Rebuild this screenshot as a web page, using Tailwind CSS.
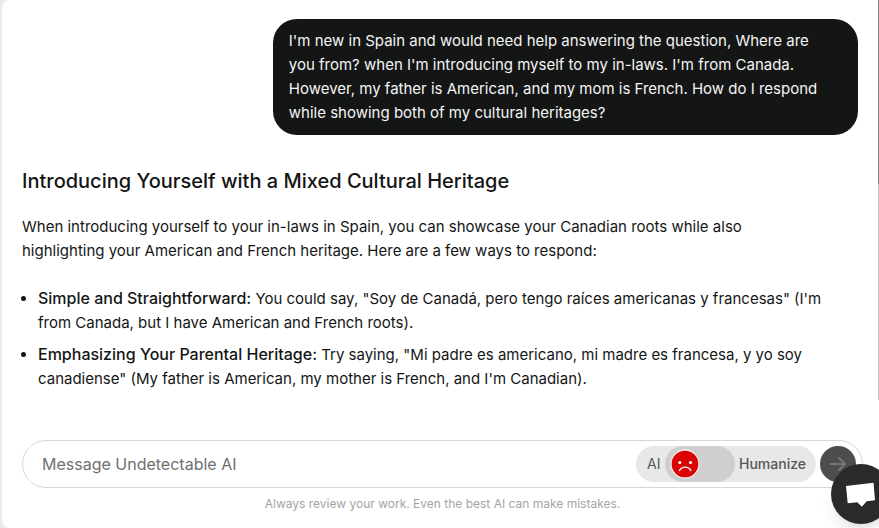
<!DOCTYPE html>
<html lang="en">
<head>
    <meta charset="UTF-8">
    <meta name="viewport" content="width=device-width, initial-scale=1.0">
    <title>Undetectable AI Chat</title>
    <script src="https://cdn.jsdelivr.net/npm/@tailwindcss/browser@4"></script>
</head>
<body class="bg-[#e9ebec] font-['Inter','Liberation_Sans',sans-serif] text-[15px] leading-6 text-[#141615]">
    <div class="ml-0.5 flex h-screen flex-col overflow-hidden rounded-l-lg bg-white">
        <div class="flex min-h-0 flex-1">
            <main class="min-w-0 flex-1 overflow-hidden px-5 pt-[19px]">
                <div class="ml-auto w-[70%] rounded-3xl bg-[#141615] py-[10px] pr-6 pl-4 text-[#f4f4f4]">
                    I'm new in Spain and would need help answering the question, Where are you from? when I'm introducing myself to my in-laws. I'm from Canada. However, my father is American, and my mom is French. How do I respond while showing both of my cultural heritages?
                </div>

                <article class="mt-8">
                    <h2 class="text-xl font-medium leading-7">Introducing Yourself with a Mixed Cultural Heritage</h2>
                    <p class="mt-5 pr-12">When introducing yourself to your in-laws in Spain, you can showcase your Canadian roots while also highlighting your American and French heritage. Here are a few ways to respond:</p>
                    <ul class="mt-6 list-disc space-y-2 pr-4 pl-4">
                        <li><strong class="text-base leading-none font-medium">Simple and Straightforward:</strong> You could say, "Soy de Canadá, pero tengo raíces americanas y francesas" (I'm from Canada, but I have American and French roots).</li>
                        <li><strong class="text-base leading-none font-medium">Emphasizing Your Parental Heritage:</strong> Try saying, "Mi padre es americano, mi madre es francesa, y yo soy canadiense" (My father is American, my mother is French, and I'm Canadian).</li>
                    </ul>
                </article>
            </main>
            <!-- Scroll indicator -->
            <div class="w-px bg-[#c1c1c1]">
                <div class="h-[46%] bg-[#888888]"></div>
            </div>
        </div>

        <footer class="pt-10 pr-4 pb-4 pl-5">
            <form class="flex h-12 items-center gap-1 rounded-full border border-[#d6d8d8] pr-[6px] pl-[19px]">
                <input type="text" aria-label="Message" placeholder="Message Undetectable AI" class="min-w-0 flex-1 text-base outline-none placeholder:text-[#6e7070]">
                <label class="flex h-9 w-[180px] items-center justify-between rounded-full bg-[#e8e8e8] pr-[10px] pl-[11px] text-sm text-[#555758]">
                    <span>AI</span>
                    <input type="checkbox" name="humanize" class="peer sr-only">
                    <span class="flex h-9 w-[70px] items-center rounded-full bg-[#cfcfcf] pl-[5px]">
                        <svg class="size-[30px]" viewBox="0 0 30 30" fill="none">
                            <circle cx="15" cy="15" r="14" fill="#d90404" stroke="#fbe9e9" stroke-width="1.3"/>
                            <circle cx="9.800" cy="13.500" r="1.600" fill="#fff"/>
                            <circle cx="20.500" cy="13.500" r="1.600" fill="#fff"/>
                            <path d="M9.500 21.500c2.600-4.500 8.800-4.500 11.400 0" stroke="#fff" stroke-width="1.4" stroke-linecap="round"/>
                        </svg>
                    </span>
                    <span class="font-medium">Humanize</span>
                </label>
                <button type="submit" aria-label="Send" class="flex size-9 items-center justify-center rounded-full bg-[#4b4d4e]">
                    <svg class="size-6" viewBox="0 0 24 24" fill="none" stroke="#747677" stroke-width="2" stroke-linecap="round" stroke-linejoin="round">
                        <path d="M4.500 12h14.500M13 6l6 6-6 6"/>
                    </svg>
                </button>
            </form>
            <p class="mt-2 text-center text-xs leading-4 text-[#a3a5a5]">Always review your work. Even the best AI can make mistakes.</p>
        </footer>
    </div>

    <button type="button" aria-label="Open chat" class="fixed -right-3 bottom-1 size-[60px] rounded-full bg-[#2a2a2a] shadow-lg shadow-black/10">
        <svg class="size-[60px]" viewBox="0 0 60 60" fill="#fff">
            <path d="M15 22 42.500 18.700 44 36.300 35.700 37.200 30.800 42.700 26.300 38.300 16.700 39.200z"/>
        </svg>
    </button>
</body>
</html>
